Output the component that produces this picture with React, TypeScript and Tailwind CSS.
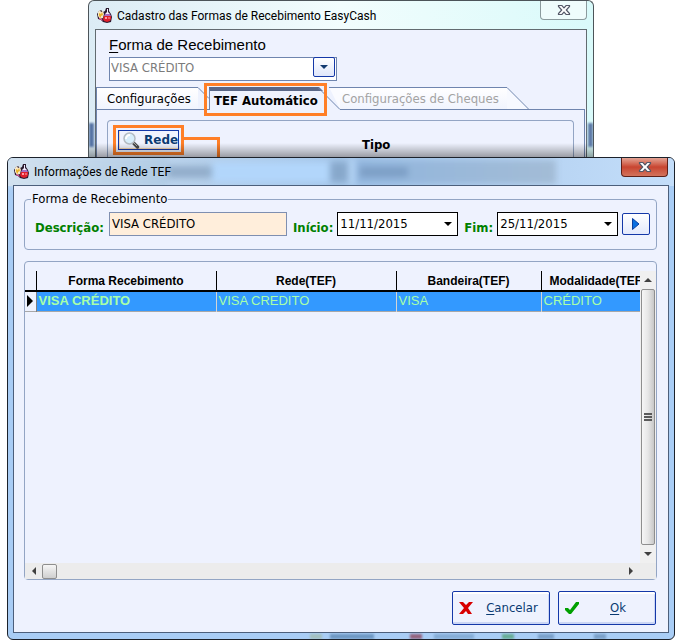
import React from "react";

function AppIcon() {
  return (
    <svg width="17" height="17" viewBox="0 0 17 17" className="shrink-0" aria-hidden="true">
      <path d="M10 1h3v3l2 3 1 3-1 5-4 1-4-1-2-2-3-1-1-5 2-3 2-1 2 2 2-1z" fill="#2b1a2e" />
      <path d="M2 5l2-2 1 2 2-1 1 3-1 4-3 1-2-3z" fill="#f7e6c8" />
      <path d="M3 6l2 1 1-2 1 3-2 1 0 2-2-2z" fill="#e8b52c" />
      <path d="M11 2h1v3l2 2H9l2-2z" fill="#f3ecff" />
      <path d="M9 7h5l1 2H8z" fill="#a86fc4" />
      <path d="M8 9h7v3l-1 2-3 1-3-1-1-2z" fill="#e0202c" />
      <path d="M9 10h2v2H9z" fill="#ff9aa0" />
      <path d="M12 10h2v2h-2z" fill="#f0626a" />
      <path d="M3 11l3 1 1 2-2-1-2-1z" fill="#d84a90" />
    </svg>
  );
}

function CloseGlyph() {
  return (
    <svg width="14" height="12" viewBox="0 0 14 12" aria-hidden="true">
      <path
        d="M1.5 1.5h3.4L7 3.8l2.1-2.3h3.4v1L9.3 6l3.2 3.5v1H9.1L7 8.2l-2.1 2.3H1.5v-1L4.7 6 1.5 2.5z"
        fill="#fff"
        stroke="#555868"
        strokeWidth="1.2"
      />
    </svg>
  );
}

function Magnifier() {
  return (
    <svg width="17" height="17" viewBox="0 0 17 17" className="shrink-0" aria-hidden="true">
      <path d="M9.5 10l5 5" stroke="#4a4a4a" strokeWidth="3.4" strokeLinecap="round" />
      <path d="M10.5 10.500l3.500 3.500" stroke="#a8a8a8" strokeWidth="1" />
      <circle cx="6.500" cy="6.500" r="5.500" fill="#d8eefb" stroke="#b4bcc4" strokeWidth="1.500" />
      <path d="M3 7a4 4 0 0 1 4-4" stroke="#fff" strokeWidth="2" fill="none" />
    </svg>
  );
}

function Triangle({ dir, fill = "#000" }: { dir: "up" | "down" | "left" | "right"; fill?: string }) {
  const points = {
    up: "0,6 4,2 8,6",
    down: "0,2 8,2 4,6",
    left: "6,0 2,4 6,8",
    right: "2,0 6,4 2,8",
  }[dir];
  return (
    <svg width="8" height="8" viewBox="0 0 8 8" className="shrink-0" aria-hidden="true">
      <polygon points={points} fill={fill} />
    </svg>
  );
}

function DateField({ id, label, value }: { id: string; label: string; value: string }) {
  return (
    <>
      <label htmlFor={id} className="mt-2 ml-1.5 shrink-0 text-[13px] font-bold text-[#008000]">
        {label}
      </label>
      <div className="ml-1 flex h-6 w-[121px] shrink-0 items-center border border-black bg-white">
        <input id={id} defaultValue={value} className="h-full w-[100px] bg-transparent pb-0.5 pl-0.5 text-[13px] text-black outline-none" />
        <button aria-label={"Abrir " + label} className="flex h-full w-5 items-center justify-center">
          <Triangle dir="down" />
        </button>
      </div>
    </>
  );
}

function BackWindow() {
  return (
    <section className="relative mr-[82px] ml-[88px] flex h-[157px] shrink-0 flex-col overflow-hidden rounded-t-md border-x border-t border-[#4c5459] bg-linear-to-r from-[#dcecf5] via-[#f2fdfd] to-[#d9fafa] px-1.5">
      <header className="flex h-7 shrink-0 items-start justify-between">
        <div className="flex items-center gap-1 pt-1.5 pl-px">
          <AppIcon />
          <h1 className="font-['Roboto',sans-serif] text-xs leading-4 text-black">Cadastro das Formas de Recebimento EasyCash</h1>
        </div>
        <button aria-label="Fechar cadastro" className="flex h-[19px] w-[47px] items-center justify-center rounded-b border border-t-0 border-[#8b9a9d] bg-[#effcfc]">
          <CloseGlyph />
        </button>
      </header>
      <div className="flex min-h-0 grow flex-col border-x border-t border-[#626b70] bg-[#eef2fe]">
        <div className="flex flex-col items-start pt-[5px] pl-[13px]">
          <label htmlFor="forma" className="font-['Liberation_Sans',Arial,sans-serif] text-[15px] leading-5 text-black">
            <span className="underline underline-offset-2">F</span>orma de Recebimento
          </label>
          <div className="relative h-6 w-[228px]">
            <select id="forma" defaultValue="VISA CRÉDITO" className="h-6 w-full appearance-none border border-[#6f85ae] bg-white pb-0.5 pl-px text-[13px] text-[#7b7b7b]">
              <option>VISA CRÉDITO</option>
            </select>
            <span className="pointer-events-none absolute top-0.5 right-0.5 flex h-5 w-[22px] items-center justify-center rounded-xs border border-[#1438a8] bg-linear-to-b from-white to-[#dfe6fb]">
              <Triangle dir="down" fill="#123a70" />
            </span>
          </div>
        </div>
        <div role="tablist" className="mt-2 mr-px flex h-[23px] shrink-0 text-[13px]">
          <button role="tab" className="w-[102px] shrink-0 border-t border-b border-l border-[#6f85ae] bg-linear-to-b from-white to-[#f1f4fe] pl-2.5 text-left text-black">
            Configurações
          </button>
          <svg width="11" height="23" viewBox="0 0 11 23" className="shrink-0" aria-hidden="true">
            <path d="M0 .5l11 11" stroke="#6f85ae" fill="none" />
            <path d="M0 22.500h11" stroke="#6f85ae" />
          </svg>
          <div className="relative flex shrink-0">
            <button role="tab" aria-selected="true" className="w-[109px] border-t-4 border-l border-t-[#5a6788] border-l-[#6f85ae] bg-[#eef2fe] pb-1 pl-1 text-left font-bold whitespace-nowrap text-black">
              TEF Automático
            </button>
            <span className="pointer-events-none absolute -top-1 -left-[5px] h-[33px] w-[123px] border-3 border-[#ff7f27]" />
          </div>
          <svg width="22" height="23" viewBox="0 0 22 23" className="shrink-0" aria-hidden="true">
            <path d="M11 0h11v22z" fill="#fafbff" />
            <path d="M0 0h1l4 4H0z" fill="#5a6788" />
            <path d="M0 .5l22 22M11 .5h11" stroke="#6f85ae" fill="none" />
          </svg>
          <button role="tab" disabled className="w-[167px] shrink-0 border-t border-b border-[#6f85ae] bg-linear-to-b from-white to-[#f1f4fe] pl-0.5 text-left text-[#a3a3a3]">
            Configurações de Cheques
          </button>
          <svg width="22" height="23" viewBox="0 0 22 23" className="shrink-0" aria-hidden="true">
            <path d="M0 0l22 22H0z" fill="#f7f9ff" />
            <path d="M0 .5l22 22H0" stroke="#6f85ae" fill="none" />
          </svg>
          <span className="grow border-b border-[#6f85ae]" />
        </div>
        <div className="mr-px flex min-h-0 grow border-x border-[#6f85ae] px-2.5 pt-2.5">
          <div className="flex grow items-start rounded-t border-x border-t border-[#93a5c4] pt-1 pl-[5px]">
            <div className="flex h-[30px] w-[71px] shrink-0 border-3 border-[#ff7f27] p-0.5">
              <button className="flex grow items-center border border-[#1438a8] bg-[#f0f3fe] pl-1 font-['DejaVu_Sans',Verdana,sans-serif] text-xs font-bold text-[#0a3a72] shadow-[inset_0_-1px_0_#f3d5b0,inset_1px_0_0_#f3d5b0]">
                <Magnifier />
                <span className="ml-1">Rede</span>
              </button>
            </div>
            <span className="mt-3 h-5 w-9 shrink-0 border-t-3 border-r-3 border-[#ff7f27]" />
            <strong className="mt-3 ml-[142px] text-[13px] leading-4 text-black">Tipo</strong>
          </div>
        </div>
      </div>
      <div className="pointer-events-none absolute inset-x-0 bottom-0 h-3.5 bg-linear-to-b from-transparent to-black/35" />
      <div className="pointer-events-none absolute right-0 bottom-2.5 h-6 w-[5px] bg-[#5f7ba8] blur-[1px]" />
      <div className="pointer-events-none absolute bottom-2.5 left-0 h-6 w-[5px] bg-[#5674a4] blur-[1px]" />
    </section>
  );
}

function SearchPanel() {
  return (
    <fieldset className="mr-[11px] ml-2.5 h-[59px] rounded border border-[#93a5c4] pl-2.5">
      <legend className="-ml-1 px-px text-[13px] leading-4 text-black">Forma de Recebimento</legend>
      <div className="mt-[5px] flex h-6 items-center">
        <label htmlFor="descricao" className="mt-2 w-[74px] shrink-0 text-[13px] font-bold text-[#008000]">
          Descrição:
        </label>
        <input id="descricao" defaultValue="VISA CRÉDITO" className="h-6 w-[178px] min-w-0 shrink border border-[#7f8fb0] bg-[#ffeedb] pb-0.5 pl-0.5 text-[13px] text-black outline-none" />
        <DateField id="inicio" label="Início:" value="11/11/2015" />
        <DateField id="fim" label="Fim:" value="25/11/2015" />
        <button aria-label="Pesquisar" className="ml-1 flex h-[22px] w-7 shrink-0 items-center justify-center rounded-xs border border-[#1438a8] bg-linear-to-b from-white to-[#e3e9fc]">
          <svg width="8" height="12" viewBox="0 0 8 12" aria-hidden="true">
            <path d="M.5.5L7 6 .5 11.500z" fill="#0a6fe0" stroke="#0a3fa0" />
          </svg>
        </button>
      </div>
    </fieldset>
  );
}

function ResultGrid() {
  return (
    <div className="mt-[11px] mr-[11px] ml-2.5 flex min-h-0 grow flex-col rounded border border-[#93a5c4] pt-[9px]">
      <div className="flex min-h-0 grow">
        <div className="min-w-0 grow overflow-hidden font-['Liberation_Sans',Arial,sans-serif]">
          <table className="w-full table-fixed border-collapse text-[13px]">
            <colgroup>
              <col className="w-[11px]" />
              <col className="w-[180px]" />
              <col className="w-[180px]" />
              <col className="w-[145px]" />
              <col />
            </colgroup>
            <thead>
              <tr className="h-5 border-b-2 border-black text-xs leading-4 text-black">
                <th className="border-r border-black p-0" aria-label="Atual" />
                <th className="border-r border-black p-0">Forma Recebimento</th>
                <th className="border-r border-black p-0">Rede(TEF)</th>
                <th className="border-r border-black p-0">Bandeira(TEF)</th>
                <th className="overflow-hidden p-0 pl-2 text-left whitespace-nowrap">Modalidade(TEF)</th>
              </tr>
            </thead>
            <tbody>
              <tr className="h-5 border-b border-[#a8a8a8] bg-[#3399ff] leading-[18px] text-[#a8ffa8]">
                <td className="border-r border-[#808080] bg-[#eef2fe] p-0 pl-0.5">
                  <svg width="6" height="12" viewBox="0 0 6 12" aria-hidden="true">
                    <path d="M0 0l6 6-6 6z" fill="#000" />
                  </svg>
                </td>
                <td className="border-r border-[#d4d4d4] p-0 pl-0.5 font-bold">VISA CRÉDITO</td>
                <td className="border-r border-[#d4d4d4] p-0 pl-0.5">VISA CREDITO</td>
                <td className="border-r border-[#d4d4d4] p-0 pl-0.5">VISA</td>
                <td className="p-0 pl-0.5">CRÉDITO</td>
              </tr>
            </tbody>
          </table>
        </div>
        <div className="flex w-4 shrink-0 flex-col items-center bg-[#f0f0f0]">
          <button aria-label="Rolar para cima" className="flex h-[18px] w-full shrink-0 items-center justify-center">
            <Triangle dir="up" fill="#404040" />
          </button>
          <div className="flex w-3.5 grow flex-col items-center justify-center gap-px rounded-xs border border-[#8e8e8e] bg-linear-to-r from-[#f6f6f6] via-[#e6e6e6] to-[#c8c8c8]">
            <span className="h-0.5 w-2 bg-[#5a5a5a]" />
            <span className="h-0.5 w-2 bg-[#5a5a5a]" />
            <span className="h-0.5 w-2 bg-[#5a5a5a]" />
          </div>
          <button aria-label="Rolar para baixo" className="flex h-[18px] w-full shrink-0 items-center justify-center">
            <Triangle dir="down" fill="#404040" />
          </button>
        </div>
      </div>
      <div className="flex h-4 shrink-0 items-center bg-[#ececec]">
        <button aria-label="Rolar para a esquerda" className="flex h-full w-[17px] items-center justify-center">
          <Triangle dir="left" fill="#404040" />
        </button>
        <span className="h-[15px] w-[15px] rounded-xs border border-[#8e8e8e] bg-linear-to-b from-[#f6f6f6] to-[#cfcfcf]" />
        <button aria-label="Rolar para a direita" className="mr-[17px] ml-auto flex h-full w-[17px] items-center justify-center">
          <Triangle dir="right" fill="#404040" />
        </button>
      </div>
    </div>
  );
}

function FrontWindow() {
  return (
    <section className="relative mr-px ml-[7px] flex min-h-0 grow flex-col overflow-hidden rounded-t-md rounded-b-md border border-[#1c222b] bg-[#a9cdf5] px-[5px] pb-1.5">
      <div className="pointer-events-none absolute inset-x-0 top-0 h-7 bg-linear-to-r from-[#cfe0f0] via-[#a4c5e8] to-[#c4defa]">
        <div className="flex h-full items-center blur-[3px]">
          <span className="h-7 w-40 bg-linear-to-r from-[#d3e2ef] to-[#b0cbe4]" />
          <span className="h-3 w-11 bg-[#93aecb]" />
          <span className="h-5 w-[118px] bg-[#b2d6fb]" />
          <span className="h-5 w-[18px] bg-[#87a8cb]" />
          <span className="h-6 w-2 bg-[#b2d2f4]" />
          <span className="flex h-6 w-[200px] items-center bg-linear-to-r from-[#90b5dd] to-[#a3bcd6] pl-1">
            <span className="h-2.5 w-12 bg-[#7d9fc6]" />
          </span>
        </div>
      </div>
      <div className="pointer-events-none absolute bottom-0 left-0 h-[5px] w-full">
        <div className="flex h-full pl-[302px] blur-[1px]">
          <span className="w-3 bg-[#a3c0c0]" />
          <span className="ml-2 w-11 bg-[#6f99c3]" />
          <span className="ml-9 w-3 bg-[#94647f]" />
          <span className="ml-3 w-10 bg-[#86add6]" />
          <span className="ml-7 w-3 bg-[#69ad98]" />
          <span className="ml-6 w-4 bg-[#7ba0c9]" />
          <span className="ml-10 w-3 bg-[#7ba0c9]" />
        </div>
      </div>
      <header className="relative flex h-[27px] shrink-0 items-start justify-between">
        <div className="flex items-center gap-1 pt-[5px]">
          <AppIcon />
          <h2 className="font-['Roboto',sans-serif] text-xs leading-4 text-black">Informações de Rede TEF</h2>
        </div>
        <button aria-label="Fechar" className="mr-px flex h-[19px] w-[47px] items-center justify-center rounded-b border border-t-0 border-[#5e2018] bg-linear-to-b from-[#e3a394] via-[#c84430] to-[#d2725c]">
          <CloseGlyph />
        </button>
      </header>
      <div className="relative flex min-h-0 grow flex-col border border-[#4c5f7b] bg-[#eef2fe] pt-[5px] pb-[7px]">
        <SearchPanel />
        <ResultGrid />
        <footer className="mt-[11px] mr-3 flex shrink-0 justify-end gap-2 text-[13px] text-[#0a3a72]">
          <button className="flex h-[34px] w-[98px] items-center rounded-xs border border-[#1438a8] bg-[#eef2fe] px-1.5 shadow-[inset_0_2px_0_#fff,inset_-1px_-2px_0_#cbd6f5]">
            <svg width="14" height="12" viewBox="0 0 14 12" aria-hidden="true">
              <path d="M0 0h4l3 3 3-3h4L9 6l4 6H9L7 9l-3 3H0l5-6z" fill="#d80000" />
            </svg>
            <span className="grow pl-2 text-center">
              <span className="underline underline-offset-2">C</span>ancelar
            </span>
          </button>
          <button className="flex h-[34px] w-[98px] items-center rounded-xs border border-[#1438a8] bg-[#eef2fe] px-1.5 shadow-[inset_0_2px_0_#fff,inset_-1px_-2px_0_#cbd6f5]">
            <svg width="14" height="12" viewBox="0 0 14 12" aria-hidden="true">
              <path d="M0 6h3l2 2 6-8h3v2L6 12H4L0 8z" fill="#00a000" />
            </svg>
            <span className="grow pl-2 text-center">
              <span className="underline underline-offset-2">O</span>k
            </span>
          </button>
        </footer>
      </div>
    </section>
  );
}

export default function App() {
  return (
    <main className="flex h-screen min-h-[480px] flex-col overflow-hidden bg-white font-['DejaVu_Sans_Condensed',Tahoma,'DejaVu_Sans',sans-serif]">
      <BackWindow />
      <FrontWindow />
    </main>
  );
}
